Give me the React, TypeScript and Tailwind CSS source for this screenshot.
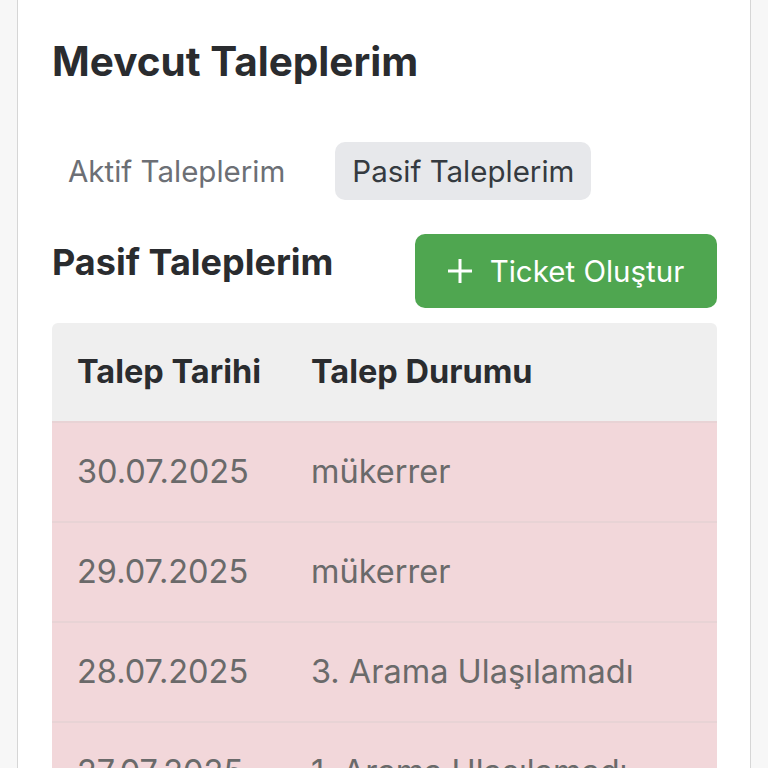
import React from "react";

const rows = [
  { date: "30.07.2025", status: "mükerrer" },
  { date: "29.07.2025", status: "mükerrer" },
  { date: "28.07.2025", status: "3. Arama Ulaşılamadı" },
  { date: "27.07.2025", status: "1. Arama Ulaşılamadı" },
];

export default function App() {
  return (
    <div
      className="h-[768px] w-[768px] overflow-hidden bg-[#f7f7f7]"
      style={{ fontFamily: "Inter, 'Noto Sans', sans-serif" }}
    >
      <div className="ml-[17px] w-[734px] min-h-[900px] border-x border-[#d6d6d6] bg-white pl-[34px] pr-[33px] pt-[38px]">
        <h1 className="h-[48px] text-[40.5px] leading-[48px] font-bold text-[#2a2c2f]">
          Mevcut Taleplerim
        </h1>
        <div className="mt-[56px] flex items-center gap-[34px]">
          <div className="h-[58px] px-[16px] flex items-center text-[29.5px] text-[#6c6f75]">
            Aktif Taleplerim
          </div>
          <div className="h-[58px] px-[17px] flex items-center rounded-[10px] bg-[#e7e8eb] text-[29.5px] text-[#353a40]">
            Pasif Taleplerim
          </div>
        </div>
        <div className="mt-[34px] flex items-start justify-between">
          <h2 className="mt-[8px] h-[40px] text-[36px] leading-[40px] font-bold text-[#2a2c2f]">
            Pasif Taleplerim
          </h2>
          <button className="h-[74px] w-[302px] rounded-[10px] bg-[#4fa650] flex items-center justify-center gap-[18px] text-white text-[29.5px]">
            <svg width="24" height="24" viewBox="0 0 24 24" fill="none" stroke="white" strokeWidth="3" strokeLinecap="square">
              <path d="M12 1v22M1 12h22" />
            </svg>
            <span>Ticket Oluştur</span>
          </button>
        </div>
        <div className="mt-[15px] rounded-t-[6px] overflow-hidden">
          <div className="h-[98px] flex items-center bg-[#efefef] text-[32.5px] font-bold text-[#2a2c2f]">
            <div className="w-[234px] pl-[25px]">Talep Tarihi</div>
            <div className="pl-[25px]">Talep Durumu</div>
          </div>
          {rows.map((r, i) => (
            <div
              key={i}
              className="h-[100px] flex items-center bg-[#f2d7da] border-t-2 border-[#e8d3d5] text-[32.5px] text-[#6a6a6a]"
            >
              <div className="w-[234px] pl-[25px]">{r.date}</div>
              <div className="pl-[25px]">{r.status}</div>
            </div>
          ))}
        </div>
      </div>
    </div>
  );
}
